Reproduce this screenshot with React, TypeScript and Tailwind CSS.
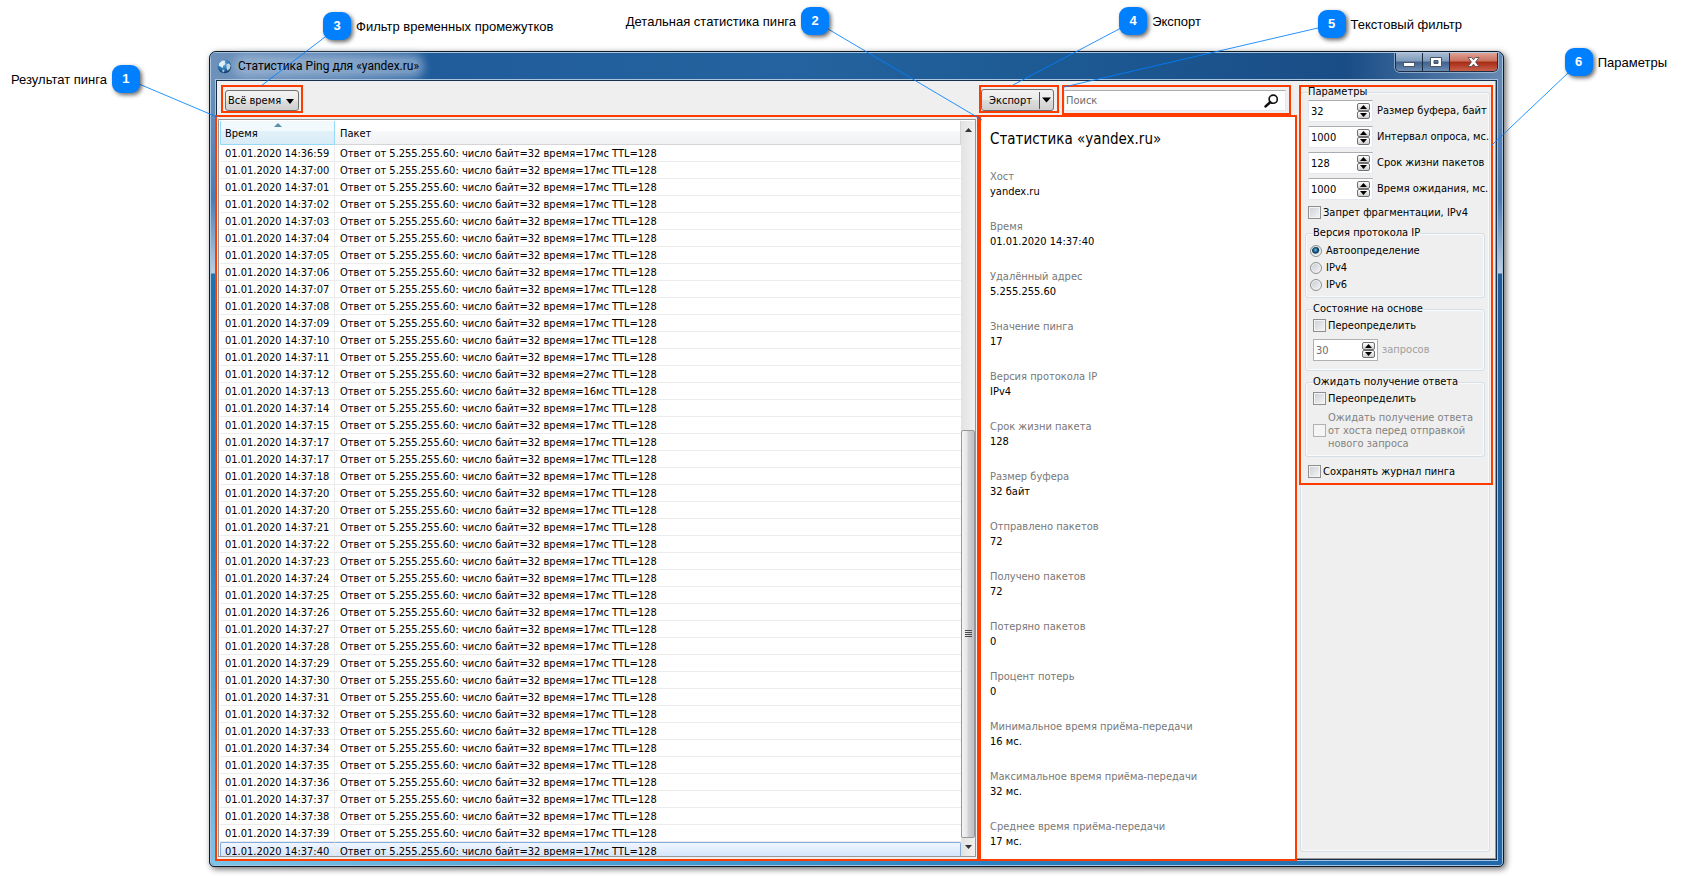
import React, { useId, useState } from "react";

const START_TIMES = [
  "14:36:59", "14:37:00", "14:37:01", "14:37:02", "14:37:03", "14:37:04", "14:37:05",
  "14:37:06", "14:37:07", "14:37:08", "14:37:09", "14:37:10", "14:37:11", "14:37:12",
  "14:37:13", "14:37:14", "14:37:15", "14:37:17", "14:37:17", "14:37:18", "14:37:20",
  "14:37:20", "14:37:21", "14:37:22", "14:37:23", "14:37:24", "14:37:25", "14:37:26",
  "14:37:27", "14:37:28", "14:37:29", "14:37:30", "14:37:31", "14:37:32", "14:37:33",
  "14:37:34", "14:37:35", "14:37:36", "14:37:37", "14:37:38", "14:37:39", "14:37:40",
];

// Everything answers in 17 ms apart from these two
const SLOW: Record<string, number> = { "14:37:12": 27, "14:37:13": 16 };

const STATS = [
  ["Хост", "yandex.ru"],
  ["Время", "01.01.2020 14:37:40"],
  ["Удалённый адрес", "5.255.255.60"],
  ["Значение пинга", "17"],
  ["Версия протокола IP", "IPv4"],
  ["Срок жизни пакета", "128"],
  ["Размер буфера", "32 байт"],
  ["Отправлено пакетов", "72"],
  ["Получено пакетов", "72"],
  ["Потеряно пакетов", "0"],
  ["Процент потерь", "0"],
  ["Минимальное время приёма-передачи", "16 мс."],
  ["Максимальное время приёма-передачи", "32 мс."],
  ["Среднее время приёма-передачи", "17 мс."],
];

const PARAMS = [
  ["32", "Размер буфера, байт"],
  ["1000", "Интервал опроса, мс."],
  ["128", "Срок жизни пакетов"],
  ["1000", "Время ожидания, мс."],
];

function GlobeIcon() {
  return (
    <svg width="15" height="15" viewBox="0 0 15 15" aria-hidden="true">
      <defs>
        <radialGradient id="globe" cx="0.4" cy="0.3" r="0.75">
          <stop offset="0" stopColor="#7cc4ee" />
          <stop offset="0.5" stopColor="#2a78b8" />
          <stop offset="1" stopColor="#0b2f57" />
        </radialGradient>
      </defs>
      <circle cx="7.5" cy="7.5" r="6.8" fill="url(#globe)" />
      <path d="M2.2 4.2 L5.2 1.6 L8.4 1.8 L7.6 3.8 L8.6 5 L6.2 6.6 L5.6 9 L3.6 7.4 L1.6 6.8 Z" fill="#e4eef5" />
      <path d="M9.4 5.6 L12 4.2 L13.6 6.4 L12.8 9.6 L10.6 11.8 L9.6 9.2 Z" fill="#c3d9e8" />
      <path d="M5.4 10.4 L7.6 10.8 L7 13.4 L5.4 12.8 Z" fill="#9fc3dc" />
    </svg>
  );
}

function SearchIcon() {
  return (
    <svg width="15" height="14" viewBox="0 0 15 14" aria-hidden="true">
      <circle cx="9.2" cy="5.2" r="4.1" fill="#fff" stroke="#111" strokeWidth="1.6" />
      <path d="M6.2 8.2 L1.6 12.4" stroke="#111" strokeWidth="2.6" strokeLinecap="round" />
    </svg>
  );
}

function CaptionButtons() {
  return (
    <div className="mr-1 flex h-[19px] shrink-0 overflow-hidden rounded-b-[5px] border border-t-0 border-[#1c2c42] shadow-[0_0_0_1px_rgba(190,210,232,0.6)]">
      <button
        aria-label="Свернуть"
        className="flex w-[27px] items-center justify-center border-r border-[#1c2c42] bg-[linear-gradient(#a9bcd4_0%,#7f9abb_45%,#3f618c_50%,#6a8bb2_100%)]"
      >
        <svg width="12" height="12" viewBox="0 0 12 12">
          <rect x="0.5" y="6.5" width="11" height="4" fill="#fff" stroke="#4a5566" />
        </svg>
      </button>
      <button
        aria-label="Развернуть"
        className="flex w-[27px] items-center justify-center border-r border-[#1c2c42] bg-[linear-gradient(#a9bcd4_0%,#7f9abb_45%,#3f618c_50%,#6a8bb2_100%)]"
      >
        <svg width="12" height="12" viewBox="0 0 12 12">
          <path d="M0.5 1.5 H11.5 V10.5 H0.5 Z M4 4.5 V7.5 H8 V4.5 Z" fill="#fff" fillRule="evenodd" stroke="#4a5566" />
        </svg>
      </button>
      <button
        aria-label="Закрыть"
        className="flex w-[47px] items-center justify-center bg-[linear-gradient(#dfa294_0%,#c9705e_45%,#a62a14_50%,#c8604a_100%)]"
      >
        <svg width="13" height="12" viewBox="0 0 13 12">
          <path
            d="M1 1.5 H4.6 L6.5 3.8 L8.4 1.5 H12 L8.6 6 L12 10.5 H8.4 L6.5 8.2 L4.6 10.5 H1 L4.4 6 Z"
            fill="#fff"
            stroke="#5b4a52"
            strokeWidth="0.9"
          />
        </svg>
      </button>
    </div>
  );
}

function Spinner({ value, label, disabled = false }: { value: string; label: string; disabled?: boolean }) {
  const id = useId();
  const button =
    "flex h-[8px] w-[13px] items-center justify-center rounded-[2px] border border-[#707070] bg-linear-to-b from-white to-[#cfcfcf]";
  return (
    <div className="flex items-center gap-1">
      <div
        className={`flex h-[22px] w-[65px] shrink-0 items-center justify-between border bg-white px-[2px] ${
          disabled ? "border-[#b0b0b0]" : "border-[#e3e9ef] border-t-[#abadb3]"
        }`}
      >
        <input
          id={id}
          type="text"
          defaultValue={value}
          disabled={disabled}
          className="h-[16px] w-[40px] bg-transparent text-black outline-none disabled:text-[#6d6d6d]"
        />
        <div className="flex flex-col">
          <button aria-label={`Увеличить: ${label}`} disabled={disabled} className={button}>
            <svg width="7" height="4" viewBox="0 0 7 4"><path d="M3.5 0 L7 4 H0 Z" fill="#000" /></svg>
          </button>
          <button aria-label={`Уменьшить: ${label}`} disabled={disabled} className={button}>
            <svg width="7" height="4" viewBox="0 0 7 4"><path d="M0 0 H7 L3.5 4 Z" fill="#000" /></svg>
          </button>
        </div>
      </div>
      <label htmlFor={id} className={`whitespace-nowrap ${disabled ? "text-[#a0a0a0]" : ""}`}>
        {label}
      </label>
    </div>
  );
}

function CheckBox({ children, disabled = false }: { children: React.ReactNode; disabled?: boolean }) {
  return (
    <label className={`flex items-center gap-[2px] leading-[13px] ${disabled ? "text-[#838383]" : ""}`}>
      <input
        type="checkbox"
        disabled={disabled}
        className="size-[13px] shrink-0 appearance-none border border-[#8e8f8f] bg-linear-to-br from-[#cbcfd5] to-[#f6f6f6] shadow-[inset_0_0_0_1px_#f4f4f4] checked:bg-[#2a6a9c] disabled:border-[#b1b1b1] disabled:from-[#f4f4f4]"
      />
      <span className="whitespace-nowrap">{children}</span>
    </label>
  );
}

function Radio({ label, checked, onSelect }: { label: string; checked: boolean; onSelect: () => void }) {
  return (
    <label className="flex h-[17px] items-center gap-1">
      <input
        type="radio"
        name="ip-version"
        checked={checked}
        onChange={onSelect}
        className="size-[12px] shrink-0 appearance-none rounded-full border border-[#8e8f8f] bg-linear-to-br from-[#c5cad0] to-[#f6f6f6] shadow-[inset_0_0_0_1px_#f4f4f4] checked:bg-[radial-gradient(circle_at_45%_40%,#5fc3ea_0%,#1b5f8c_25%,#0d3550_38%,#e4e8ec_52%)]"
      />
      {label}
    </label>
  );
}

function Group({ title, children, className = "" }: { title: string; children: React.ReactNode; className?: string }) {
  return (
    <fieldset className={`min-w-0 rounded-[3px] border border-[#d5dfe5] px-[7px] shadow-[inset_0_0_0_1px_#fafafa] ${className}`}>
      <legend className="h-[14px] leading-[14px]">{title}</legend>
      {children}
    </fieldset>
  );
}

function PingTable() {
  return (
    <div className="flex min-w-0 flex-1 bg-[#efefef] p-px pt-[2px] pb-[2px] outline-2 outline-[#ff3c00] contain-size">
      <div className="flex min-w-0 flex-1 overflow-hidden border border-[#979797] bg-white pt-px pl-px">
        <div className="min-w-0 flex-1 overflow-hidden">
          <table className="w-full table-fixed border-separate border-spacing-0">
            <thead>
              <tr className="h-[24px] text-left">
                <th className="relative w-[115px] border-r border-b border-l border-[#96d9f9] bg-[linear-gradient(#f2f9fc_0%,#f2f9fc_42%,#e1f1f9_45%,#d8ecf6_100%)] px-1 pt-[2px] font-normal">
                  Время
                  <svg className="absolute top-[2px] left-[53px]" width="8" height="4" viewBox="0 0 8 4">
                    <path d="M4 0 L8 4 H0 Z" fill="#5a8fa8" />
                  </svg>
                </th>
                <th className="border-r border-b border-[#d5d5d5] bg-[linear-gradient(#fff_0%,#fff_42%,#f7f8fa_45%,#f1f2f4_100%)] px-[5px] pt-[2px] font-normal">
                  Пакет
                </th>
              </tr>
            </thead>
            <tbody>
              {START_TIMES.map((time, idx) => {
                const selected = idx === START_TIMES.length - 1;
                const cell = selected
                  ? "border-t border-t-[#84acdd] pt-px bg-linear-to-b from-[#f0f6fe] to-[#cfe1fb]"
                  : "border-b border-b-[#ececec] pt-[2px]";
                return (
                  <tr key={idx} className="h-[17px] leading-[14px] whitespace-nowrap">
                    <td className={`border-r border-r-[#ececec] ${cell} ${selected ? "rounded-tl-[2px] border-l border-l-[#84acdd] pl-1" : "pl-[5px]"}`}>
                      01.01.2020 {time}
                    </td>
                    <td className={`pl-[5px] ${cell} ${selected ? "rounded-tr-[2px] border-r border-r-[#84acdd]" : ""}`}>
                      Ответ от 5.255.255.60: число байт=32 время={SLOW[time] ?? 17}мс TTL=128
                    </td>
                  </tr>
                );
              })}
            </tbody>
          </table>
        </div>

        {/* Scroll bar */}
        <div className="flex w-[14px] shrink-0 flex-col items-center bg-linear-to-r from-[#e3e3e3] to-[#f0f0f0]">
          <div className="flex h-[17px] items-center justify-center">
            <svg width="7" height="4" viewBox="0 0 7 4"><path d="M3.5 0 L7 4 H0 Z" fill="#333" /></svg>
          </div>
          <div className="flex w-full flex-1 flex-col">
            <div className="grow-[293] basis-0" />
            <div className="flex w-full grow-[407] basis-0 items-center justify-center rounded-[2px] border border-[#979797] bg-[linear-gradient(90deg,#f5f5f5_0%,#e6e6e8_40%,#cfd0d4_55%,#bfc0c6_100%)]">
              <svg width="7" height="8" viewBox="0 0 7 8">
                <path d="M0 0.5 H7 M0 2.5 H7 M0 4.5 H7 M0 6.5 H7" stroke="#4a4a4a" />
              </svg>
            </div>
          </div>
          <div className="flex h-[18px] items-center justify-center">
            <svg width="7" height="4" viewBox="0 0 7 4"><path d="M0 0 H7 L3.5 4 Z" fill="#333" /></svg>
          </div>
        </div>
      </div>
    </div>
  );
}

function StatsPanel() {
  return (
    <div className="mr-[2px] w-[314px] shrink-0 bg-white px-[9px] pb-[10px] outline-2 outline-[#ff3c00]">
      <h2 className="h-[52px] pt-[12px] text-[15px] leading-[20px]">Статистика «yandex.ru»</h2>
      <dl className="flex flex-col gap-[20px] leading-[15px]">
        {STATS.map(([name, value]) => (
          <div key={name}>
            <dt className="text-[#787878]">{name}</dt>
            <dd>{value}</dd>
          </div>
        ))}
      </dl>
    </div>
  );
}

function Toolbar() {
  return (
    <div className="flex h-[36px] shrink-0 items-start bg-[#efefef] pt-1 pr-[6px] pl-1">
      <div className="h-[28px] w-[82px] border-2 border-[#ff3c00] px-[2px] pt-[3px]">
        <button className="flex h-[21px] w-full items-center justify-between rounded-[3px] border border-[#707070] bg-[linear-gradient(#f2f2f2_0%,#ebebeb_48%,#dddddd_52%,#cfcfcf_100%)] pt-px pr-1 pl-[2px] whitespace-nowrap">
          Всё время
          <svg width="8" height="5" viewBox="0 0 8 5"><path d="M0 0 H8 L4 5 Z" fill="#000" /></svg>
        </button>
      </div>
      <div className="flex-1" />
      <div className="h-[28px] w-[80px] border-2 border-[#ff3c00] pt-[2px] pr-[3px]">
        <div className="flex h-[22px] items-center rounded-[3px] border border-[#707070] bg-[linear-gradient(#f2f2f2_0%,#ebebeb_48%,#dddddd_52%,#cfcfcf_100%)]">
          <button className="h-full flex-1 pt-px text-center">Экспорт</button>
          <button aria-label="Варианты экспорта" className="flex h-[17px] w-[14px] items-center justify-center border-l border-[#555]">
            <svg width="9" height="6" viewBox="0 0 9 6"><path d="M0 0.5 H9 L4.5 5.5 Z" fill="#000" /></svg>
          </button>
        </div>
      </div>
      <div className="ml-[3px] h-[30px] w-[229px] border-2 border-[#ff3c00] pt-[3px] pr-[3px]">
        <div className="flex h-[21px] items-center border border-[#e3e9ef] border-t-[#abadb3] bg-white pr-[6px] pl-px">
          <input
            type="text"
            aria-label="Поиск"
            placeholder="Поиск"
            className="min-w-0 flex-1 bg-transparent outline-none placeholder:text-[#6d6d6d]"
          />
          <button aria-label="Найти"><SearchIcon /></button>
        </div>
      </div>
    </div>
  );
}

function ParamsPanel() {
  const [version, setVersion] = useState("Автоопределение");
  return (
    <div className="flex w-[199px] shrink-0 flex-col border-r border-b border-[#9a9a9a] bg-[#efefef] pt-1 pr-[5px] pb-[6px] pl-[3px]">
      <Group title="Параметры" className="relative flex-1">
        <div className="flex flex-col gap-1 pt-px">
          {PARAMS.map(([value, label]) => (
            <Spinner key={label} value={value} label={label} />
          ))}
        </div>
        <div className="pt-[6px]">
          <CheckBox>Запрет фрагментации, IPv4</CheckBox>
        </div>
        <div className="-mx-[3px] flex flex-col gap-[4px] pt-[7px]">
          <Group title="Версия протокола IP" className="h-[72px]">
            <div className="-mx-[3px] pt-[2px]">
              {["Автоопределение", "IPv4", "IPv6"].map((name) => (
                <Radio key={name} label={name} checked={version === name} onSelect={() => setVersion(name)} />
              ))}
            </div>
          </Group>
          <Group title="Состояние на основе" className="h-[69px]">
            <div className="flex flex-col gap-[7px] pt-[3px]">
              <CheckBox>Переопределить</CheckBox>
              <Spinner value="30" label="запросов" disabled />
            </div>
          </Group>
          <Group title="Ожидать получение ответа" className="h-[82px]">
            <div className="flex flex-col gap-[6px] pt-[3px]">
              <CheckBox>Переопределить</CheckBox>
              <CheckBox disabled>
                Ожидать получение ответа
                <br />
                от хоста перед отправкой
                <br />
                нового запроса
              </CheckBox>
            </div>
          </Group>
        </div>
        <div className="pt-[8px]">
          <CheckBox>Сохранять журнал пинга</CheckBox>
        </div>
        {/* Highlight around the settings, drawn over the group border */}
        <div className="pointer-events-none absolute -top-[14px] -right-[4px] -left-[2px] h-[400px] border-2 border-[#ff3c00]" />
      </Group>
    </div>
  );
}

function PingWindow() {
  return (
    <div className="rounded-t-[7px] rounded-b-[5px] border border-[#0d1b2b] bg-[#2a6aa8] shadow-[2px_2px_6px_rgba(0,0,0,0.6)]">
      <div className="rounded-t-[6px] rounded-b-[4px] border border-[#a9c4de]">
        <div className="flex h-[26px] items-start justify-between rounded-t-[5px] bg-[linear-gradient(90deg,#6f91ba_0%,#4f7cb0_10%,#205c9a_17%,#24639f_45%,#1d5a94_65%,#1a4d86_88%,#456f9f_95%,#6788b0_100%)]">
          <div className="flex h-full items-center gap-[6px] pl-[6px]">
            <GlobeIcon />
            <h1 className="rounded-full bg-[#a9c0da]/60 font-[Roboto,'Open_Sans',sans-serif] text-[12px] leading-[14px] whitespace-nowrap shadow-[0_0_8px_5px_rgba(169,192,218,0.6)]">
              Статистика Ping для «yandex.ru»
            </h1>
          </div>
          <CaptionButtons />
        </div>
        <div className="flex">
          <div className="w-[4px] shrink-0 bg-[linear-gradient(#6f91ba_0px,#4a7db5_120px,#bccfe0_194px,#2072ae_195px,#2a80bc_60%,#7cc3e8_100%)]" />
          <div className="min-w-0 flex-1 border border-[#a9c4de]">
            <div className="flex border border-[#16304c]">
              <div className="flex min-w-0 flex-1 flex-col">
                <Toolbar />
                <div className="flex gap-1 bg-[#ff3c00]">
                  <PingTable />
                  <StatsPanel />
                </div>
              </div>
              <ParamsPanel />
            </div>
          </div>
          <div className="w-[4px] shrink-0 bg-[linear-gradient(#6788b0_0px,#4a78b2_120px,#bccfe4_194px,#1f5c9a_195px,#1f68ac_100%)]" />
        </div>
        <div className="h-[4px] rounded-b-[3px] bg-[linear-gradient(90deg,#7cc3e8_0%,#4aa0d4_30%,#2a80c0_60%,#1f66aa_100%)]" />
      </div>
    </div>
  );
}

function Callout({ number, text, className, reverse = false }: { number: number; text: string; className: string; reverse?: boolean }) {
  return (
    <div className={`absolute flex items-center gap-[5px] ${reverse ? "flex-row-reverse" : ""} ${className}`}>
      <span className="flex size-[28px] items-center justify-center rounded-[9px] bg-[#0080ff] text-[13px] font-bold text-white shadow-[2px_2px_4px_rgba(0,0,0,0.6)]">
        {number}
      </span>
      <span className="pt-px text-[13px] whitespace-nowrap">{text}</span>
    </div>
  );
}

export default function App() {
  return (
    <main className="relative min-h-screen bg-white pt-[51px] pr-[177px] pb-[9px] pl-[209px] font-['DejaVu_Sans_Condensed','DejaVu_Sans',sans-serif] text-[11px] leading-[14px] text-black">
      <PingWindow />

      {/* Callouts follow the window corner they point at */}
      <div className="pointer-events-none absolute inset-0 font-['Liberation_Sans',Arial,sans-serif]">
        <svg className="absolute top-0 left-0" width="360" height="130" stroke="#0080ff" strokeWidth="1" strokeOpacity="0.85">
          <line x1="139" y1="84" x2="217" y2="117" />
          <line x1="325" y1="37" x2="261" y2="86" />
        </svg>
        <svg className="absolute top-0 right-0" width="881" height="150" stroke="#0080ff" strokeWidth="1" strokeOpacity="0.85">
          <line x1="28" y1="29" x2="182" y2="120" />
          <line x1="321" y1="28" x2="213" y2="85" />
          <line x1="518" y1="28" x2="264" y2="87" />
          <line x1="768" y1="73" x2="692" y2="145" />
        </svg>
        <Callout number={1} text="Результат пинга" reverse className="top-[65px] left-[11px]" />
        <Callout number={3} text="Фильтр временных промежутков" className="top-[12px] left-[323px]" />
        <Callout number={2} text="Детальная статистика пинга" reverse className="top-[7px] right-[852px]" />
        <Callout number={4} text="Экспорт" className="top-[7px] right-[480px]" />
        <Callout number={5} text="Текстовый фильтр" className="top-[10px] right-[219px]" />
        <Callout number={6} text="Параметры" className="top-[48px] right-[14px]" />
      </div>
    </main>
  );
}
